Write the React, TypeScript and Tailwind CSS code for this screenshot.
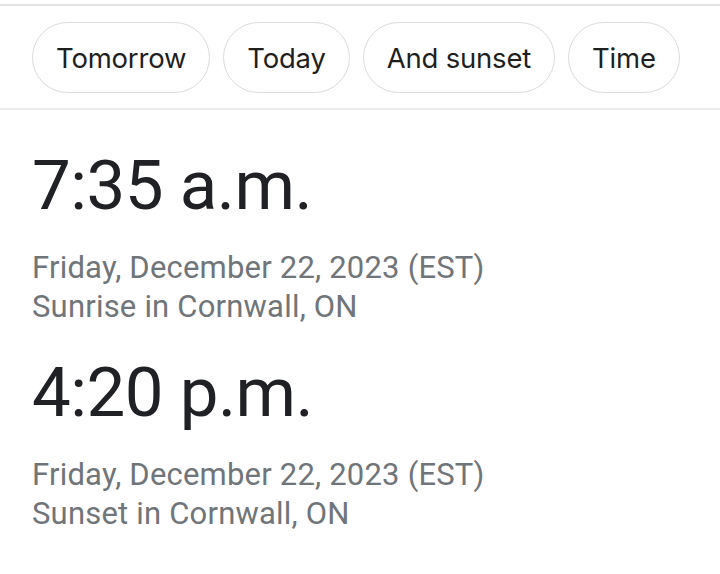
import React from "react";

const chips = ["Tomorrow", "Today", "And sunset", "Time"];

function Entry({ time, label }: { time: string; label: string }) {
  return (
    <div className="flex flex-col">
      <div className="text-[69px] leading-[80px] text-[#202124] tracking-[-0.5px]" style={{ fontFamily: "Roboto, sans-serif" }}>
        {time}
      </div>
      <div className="mt-[22px] text-[31px] leading-[39px] text-[#70757a] tracking-[0.2px]" style={{ fontFamily: "Roboto, sans-serif" }}>
        <div>Friday, December 22, 2023 (EST)</div>
        <div>{label}</div>
      </div>
    </div>
  );
}

export default function App() {
  return (
    <div className="w-[720px] h-[574px] bg-white overflow-hidden">
      <div className="mt-[4px] h-[2px] bg-[#e3e3e3]" />
      <div className="flex gap-[13px] pl-[32px] pt-[16px] pb-[15px]">
        {chips.map((c) => (
          <div
            key={c}
            className="h-[71px] px-[23px] pt-[2px] flex items-center rounded-full border-[1.5px] border-[#dadce0] text-[27.5px] tracking-[-0.2px] text-[#1f1f1f]"
            style={{ fontFamily: "Inter, sans-serif" }}
          >
            {c}
          </div>
        ))}
      </div>
      <div className="h-[2px] bg-[#ececec]" />
      <div className="pl-[32px] pt-[36px] flex flex-col gap-[27px]">
        <Entry time="7:35 a.m." label="Sunrise in Cornwall, ON" />
        <Entry time="4:20 p.m." label="Sunset in Cornwall, ON" />
      </div>
    </div>
  );
}
